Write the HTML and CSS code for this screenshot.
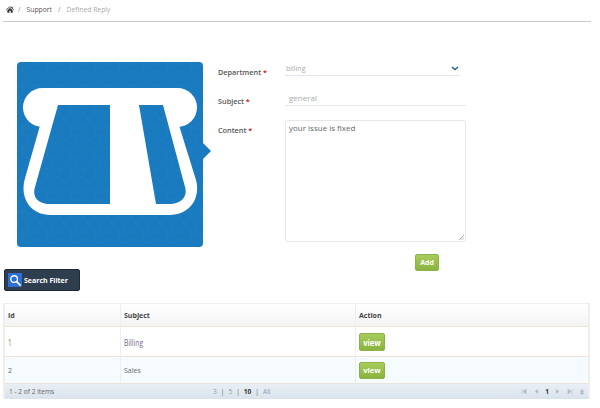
FILE: index.html
```html
<!DOCTYPE html>
<html lang="en">
<head>
<meta charset="utf-8">
<title>Defined Reply</title>
<link rel="stylesheet" href="styles.css">
</head>
<body>
<nav class="crumbs">
  <svg class="home" viewBox="0 0 12 10" width="8" height="7"><path d="M6 0 0 5l.7.8L6 1.400l5.300 4.400.7-.8-2-1.700V1H8.700v1L6 0ZM2 6v4h3V7h2v3h3V6L6 2.700 2 6Z" fill="#333"/></svg>
  <span class="sep">/</span><span class="crumb">Support</span><span class="sep">/</span><span class="crumb muted">Defined Reply</span>
</nav>
<section class="editor">
  <div class="logo">
    <svg viewBox="0 0 186 185" width="186" height="185">
      <defs>
        <pattern id="tex" width="24" height="21" patternUnits="userSpaceOnUse">
          <path d="M0 5 6 1l6 4 6-4 6 4M6 1v8l6 4 6-4V1M0 16l6-7M24 16l-6-7M12 13v8" fill="none" stroke="#2a86c6" stroke-width=".8" opacity=".35"/>
        </pattern>
      </defs>
      <rect width="186" height="185" rx="4" fill="#1a7abf"/>
      <rect width="186" height="185" rx="4" fill="url(#tex)"/>
      <rect x="6" y="26" width="174" height="39" rx="19.500" fill="#fff"/>
      <path d="M24 60 7.500 118C3 137 14 153 34 153H152C172 153 184 137 179 118L161 60Z" fill="#fff"/>
      <path d="M41 43H93V142H33C21 142 15 135 18 125Z" fill="#1a7abf"/>
      <path d="M41 43H93V142H33C21 142 15 135 18 125Z" fill="url(#tex)"/>
      <path d="M122 43H146L168 125C171 135 164 142 152 142H139Z" fill="#1a7abf"/>
      <path d="M122 43H146L168 125C171 135 164 142 152 142H139Z" fill="url(#tex)"/>
    </svg>
    <span class="logo-tip"></span>
  </div>
  <form class="form">
    <div class="row row-dept">
      <label class="label">Department <em>*</em></label>
      <div class="select"><span>billing</span>
        <svg viewBox="0 0 8 5" width="6" height="4"><path d="M1 1l3 2.500L7 1" fill="none" stroke="#1f5f9e" stroke-width="1.400"/></svg>
      </div>
    </div>
    <div class="row row-subject">
      <label class="label">Subject <em>*</em></label>
      <div class="input">general</div>
    </div>
    <div class="row">
      <label class="label">Content <em>*</em></label>
      <div class="textarea">your issue is fixed
        <svg class="grip" viewBox="0 0 6 6" width="6" height="6"><path d="M1 6 6 1M3.500 6 6 3.500" stroke="#888" stroke-width=".7"/></svg>
      </div>
    </div>
    <div class="submit"><button type="button" class="btn btn-add">Add</button></div>
  </form>
</section>
<div class="filter-wrap">
  <button type="button" class="filter">
    <span class="filter-icon"><svg viewBox="0 0 14 14" width="13" height="13"><circle cx="5.500" cy="5.500" r="3.600" fill="none" stroke="#fff" stroke-width="1.400"/><path d="M8.300 8.300 12.500 12.500" stroke="#fff" stroke-width="1.800"/></svg></span>
    <span>Search Filter</span>
  </button>
</div>
<div class="grid">
  <div class="cell head">Id</div><div class="cell head">Subject</div><div class="cell head last">Action</div>
  <div class="cell tall"><span class="narrow id-one">1</span></div><div class="cell tall"><span class="narrow billing">Billing</span></div><div class="cell tall last"><button type="button" class="btn btn-view"><span class="view-label">view</span></button></div>
  <div class="cell alt">2</div><div class="cell alt">Sales</div><div class="cell alt last"><button type="button" class="btn btn-view small">view</button></div>
  <div class="pager">
    <span class="count">1 - 2 of 2 items</span>
    <span class="sizes"><a>3</a><i>|</i><a>5</a><i>|</i><b>10</b><i>|</i><a>All</a></span>
    <span class="pages">
      <svg viewBox="0 0 7 6" width="6" height="5"><path d="M1 0v6M6 0 2 3l4 3Z" fill="#b4bcc6" stroke="#b4bcc6" stroke-width=".6"/></svg>
      <svg viewBox="0 0 7 6" width="6" height="5"><path d="M6 0 2 3l4 3Z" fill="#b4bcc6"/></svg>
      <b>1</b>
      <svg viewBox="0 0 7 6" width="6" height="5"><path d="M1 0 5 3 1 6Z" fill="#b4bcc6"/></svg>
      <svg viewBox="0 0 7 6" width="6" height="5"><path d="M6 0v6M1 0l4 3-4 3Z" fill="#b4bcc6" stroke="#b4bcc6" stroke-width=".6"/></svg>
      <svg viewBox="0 0 7 7" width="6" height="6"><path d="M3.500 0 6 3H4.500L6 6H1l1.500-3H1Z" fill="#b4bcc6"/></svg>
    </span>
  </div>
</div>
</body>
</html>
```
FILE: styles.css
```css
* { box-sizing: border-box; }
html, body { margin: 0; padding: 0; background: #fff; }
body { width: 600px; height: 408px; overflow: hidden; font-family: "Open Sans", "Liberation Sans", sans-serif; font-size: 7px; color: #555; }

.crumbs { display: flex; align-items: center; height: 22px; margin: 0 9px 0 3px; padding: 0 0 3px 3px; border-bottom: 1px solid #c8c8c8; font-size: 6.800px; color: #555; }
.home { margin-right: 4px; }
.sep { color: #888; margin-right: 6px; }
.crumb { margin-right: 6px; }
.muted { color: #aaa; }

.editor { display: flex; align-items: flex-start; height: 207px; margin-top: 40px; padding-left: 17px; }
.logo { position: relative; width: 186px; height: 185px; flex: none; }
.logo svg { display: block; }
.logo-tip { position: absolute; left: 186px; top: 81px; border-left: 8px solid #1a7abf; border-top: 8px solid transparent; border-bottom: 8px solid transparent; }

.form { margin-left: 15px; width: 248px; }
.row { display: flex; align-items: flex-start; }
.label { width: 67px; flex: none; font-size: 7.300px; font-weight: 600; color: #555; padding-top: 5px; }
.label em { color: #d00; font-style: normal; }
.row-dept { height: 29px; }
.row-subject { height: 29px; }

.select { display: flex; justify-content: space-between; align-items: center; width: 175px; height: 14px; padding: 0 1px 0 1px; border-bottom: 1px solid #e2e6ef; font-size: 7px; color: #aaa; }
.select svg { width: 8px; height: 5px; }
.input { width: 182px; height: 15px; padding: 1px 4px 0 4px; border-bottom: 1px solid #e6e8ef; font-size: 8px; line-height: 12px; color: #aaa; }
.textarea { position: relative; width: 182px; height: 122px; padding: 1px 3px; border: 1px solid #e6e6e6; border-radius: 3px; font-size: 8px; line-height: 12px; color: #666; }
.grip { position: absolute; right: 1px; bottom: 1px; }

.submit { display: flex; justify-content: flex-end; margin-top: 12px; padding-right: 27px; }
.btn { display: block; border: 1px solid #8cb24a; border-radius: 2px; background: linear-gradient(#a7cc5c, #8ab33f); color: #fff; font-family: "Open Sans", "Liberation Sans", sans-serif; font-weight: 700; padding: 0; }
.btn-add { width: 24px; height: 17px; font-size: 7px; }
.btn-view { width: 26px; height: 18px; font-size: 7.500px; }
.btn-view.small { height: 17px; font-size: 7.500px; }
.view-label { display: inline-block; transform: scaleY(1.250); }

.filter-wrap { height: 34px; margin: 0 0 0 4px; }
.filter { display: flex; align-items: center; gap: 2px; width: 76px; height: 22px; padding: 0 0 0 3px; border: 1px solid #1f2933; border-radius: 2px; background: #2f3e4e; color: #fff; font-family: "Open Sans", "Liberation Sans", sans-serif; font-size: 7px; font-weight: 700; }
.filter-icon { display: flex; align-items: center; justify-content: center; width: 14px; height: 14px; background: #2d6fd8; }

.grid { display: grid; grid-template-columns: 116px 235px 232px; grid-template-rows: 23px 30px 27px 15px; width: 587px; margin-left: 3px; border: 2px solid #eee; border-width: 1px 2px 0 2px; }
.cell { display: flex; align-items: center; padding-left: 3px; border-right: 1px solid #eee; border-bottom: 1px solid #eee3d8; font-size: 7px; color: #666; }
.head { background: linear-gradient(#fff, #f3f3f3); font-weight: 700; color: #444; font-size: 7px; }
.tall { background: #fff; }
.alt { background: #f6fbff; border-bottom-color: #e8e3dc; }
.narrow { display: inline-block; transform-origin: left center; transform: scale(.8, 1.150); }
.id-one { color: #a0683a; font-size: 8px; }
.billing { color: #75668c; font-size: 8.500px; }
.last { border-right: 0; }
.pager { grid-column: 1 / -1; display: flex; align-items: center; position: relative; padding-left: 4px; background: linear-gradient(#e9eff4, #d9e3ec); font-size: 6.600px; color: #666; }
.sizes { position: absolute; left: 208px; display: flex; gap: 4px; color: #8a9bb0; }
.sizes a { color: #8a9bb0; }
.sizes b { color: #333; }
.sizes i { font-style: normal; color: #666; }
.pages { position: absolute; right: 3px; display: flex; align-items: center; gap: 6px; }
.pages b { color: #333; }
```
